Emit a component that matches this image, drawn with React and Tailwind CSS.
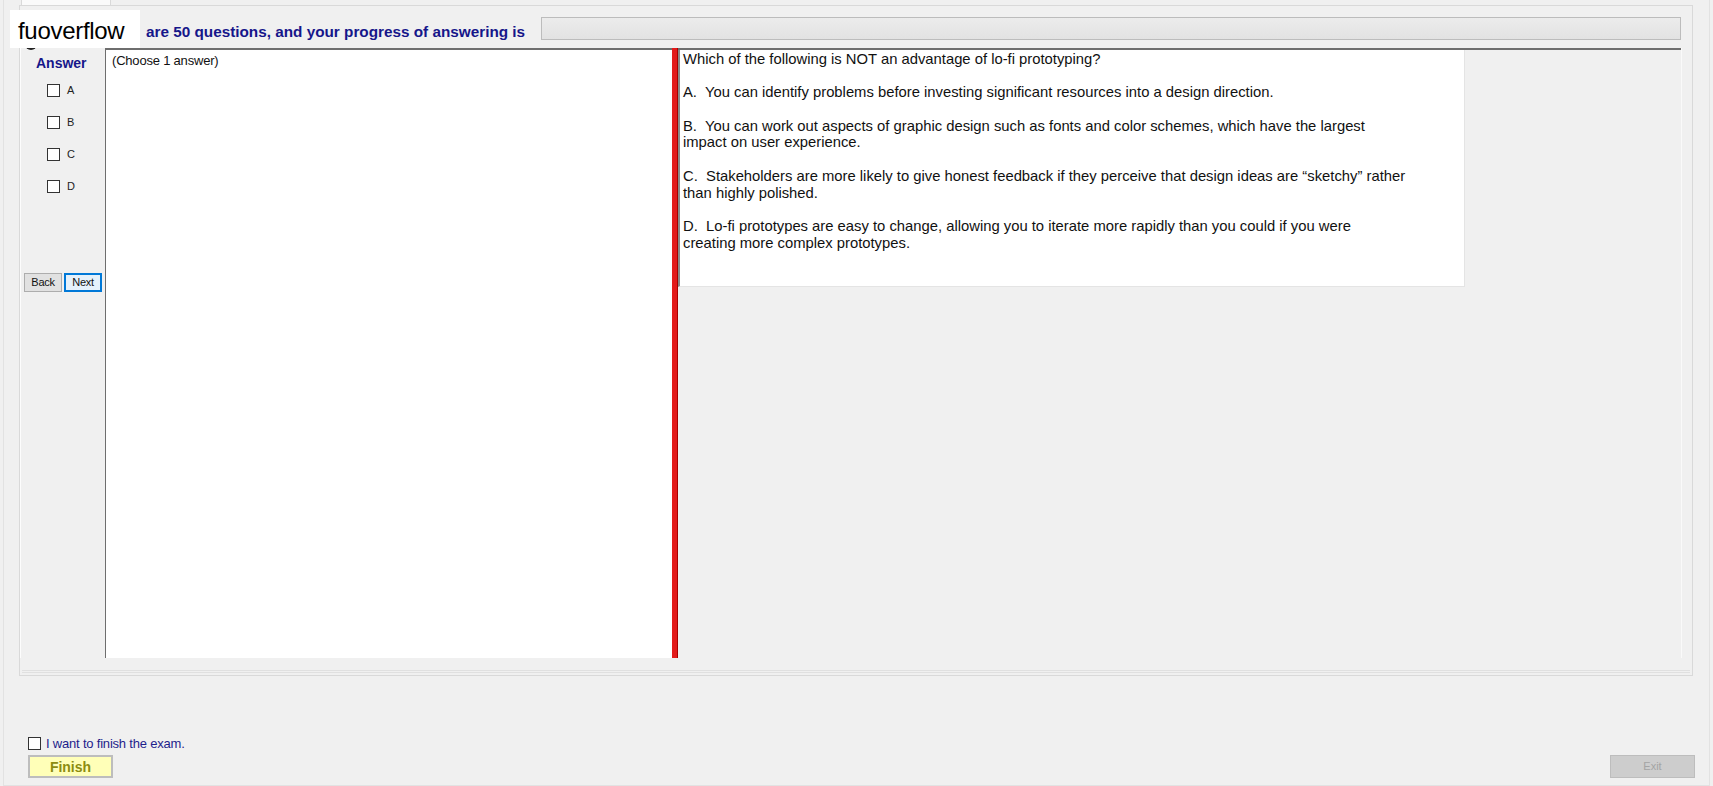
import React from 'react';

const Check = ({ label, className = '' }) => (
    <div className={`flex items-center gap-[7px] ${className}`}>
        <div className="w-[13px] h-[13px] border border-[#333] bg-white"></div>
        <span className="text-[11px] text-[#222] leading-none">{label}</span>
    </div>
);

const App = () => {
    const options = ['A', 'B', 'C', 'D'];

    return (
        <div className="relative w-[1713px] h-[786px] bg-[#f0f0f0] overflow-hidden font-['Liberation_Sans',Arial,sans-serif]">
            {/* watermark */}
            <div className="absolute left-[10px] top-[10px] w-[130px] h-[38px] bg-white z-10 flex items-center pl-[8px]">
                <span className="text-[24px] text-black leading-none tracking-[-0.3px] mt-[3px]">fuoverflow</span>
            </div>

            <div className="h-[786px] border-l border-r border-b border-[#e2e2e2] mx-[3px] pt-0">
                {/* tab header */}
                <div className="pl-[17px] h-[5px]">
                    <div className="w-[90px] h-[5px] bg-[#fafafa] border-l border-r border-[#d9d9d9]"></div>
                </div>

                {/* tab page */}
                <div className="ml-[15px] w-[1674px] h-[671px] border border-[#d9d9d9] bg-[#f0f0f0] flex flex-col">
                    {/* header row */}
                    <div className="h-[42px] flex items-end">
                        <div className="ml-[5px] w-[12px] h-[12px] rounded-full bg-[#222] mb-[-2px]"></div>
                        <div className="ml-[109px] mb-[9px] text-[15.3px] font-bold text-[#16168a] whitespace-nowrap leading-none">
                            are 50 questions, and your progress of answering is
                        </div>
                        <div className="ml-[16px] mb-[8px] w-[1140px] h-[23px] border border-[#bcbcbc] bg-[linear-gradient(#ececec,#e2e2e2)]"></div>
                    </div>

                    {/* content row */}
                    <div className="flex h-[610px]">
                        <div className="w-[85px] pl-[1px] border-l border-[#fdfdfd] flex flex-col">
                            <div className="pl-[14px] pt-[8px] text-[14px] font-bold text-[#16168a] leading-none">Answer</div>
                            <div className="flex flex-col gap-[19px] pl-[25px] pt-[14px]">
                                {options.map((o) => (
                                    <Check key={o} label={o} />
                                ))}
                            </div>
                            <div className="flex gap-[2px] pl-[2px] mt-[80px]">
                                <button className="w-[38px] h-[19px] bg-[#e1e1e1] border border-[#adadad] text-[11px] text-[#111] leading-none tracking-[-0.3px]">Back</button>
                                <button className="w-[38px] h-[19px] bg-[#e5f1fb] border-2 border-[#0078d7] text-[11px] text-[#111] leading-none tracking-[-0.3px]">Next</button>
                            </div>
                        </div>

                        <div className="w-[567px] bg-white border-l border-t-2 border-[#6e6e6e]">
                            <div className="pl-[6px] pt-[1px] text-[13px] text-[#111] tracking-[-0.2px]">(Choose 1 answer)</div>
                        </div>

                        <div className="w-[6px] bg-[#e31b1b] border-r border-[#a80000]"></div>

                        <div className="w-[1003px] border-t-2 border-[#6e6e6e] bg-[#f0f0f0]">
                            <div className="w-[787px] h-[237px] bg-white border-l-2 border-[#8a8a8a] border-r border-b border-r-[#e4e4e4] border-b-[#e4e4e4] pl-[3px] pt-[1px] text-[14.8px] leading-[16.7px] text-[#111] whitespace-nowrap">
                                <p>Which of the following is NOT an advantage of lo-fi prototyping?</p>
                                <p className="mt-[16.7px]">A.&nbsp; You can identify problems before investing significant resources into a design direction.</p>
                                <p className="mt-[16.7px]">B.&nbsp; You can work out aspects of graphic design such as fonts and color schemes, which have the largest<br />impact on user experience.</p>
                                <p className="mt-[16.7px]">C.&nbsp; Stakeholders are more likely to give honest feedback if they perceive that design ideas are “sketchy” rather<br />than highly polished.</p>
                                <p className="mt-[16.7px]">D.&nbsp; Lo-fi prototypes are easy to change, allowing you to iterate more rapidly than you could if you were<br />creating more complex prototypes.</p>
                            </div>
                        </div>

                        <div className="w-[11px] border-l border-[#fafafa]"></div>
                    </div>

                    <div className="mx-[2px] mt-[12px] h-[3px] border-t border-b border-[#e0e0e0]"></div>
                </div>

                {/* bottom area */}
                <div className="flex items-end justify-between pl-[24px] pr-[14px] mt-[61px]">
                    <div className="flex flex-col gap-[5px]">
                        <div className="flex items-center gap-[5px]">
                            <div className="w-[13px] h-[13px] border border-[#333] bg-white"></div>
                            <span className="text-[13px] text-[#1e1e8c] leading-none tracking-[-0.2px]">I want to finish the exam.</span>
                        </div>
                        <button className="w-[85px] h-[23px] bg-[#ffffb8] border-2 border-[#bdbdbd] text-[14px] font-bold text-[#8c8c10] leading-none">Finish</button>
                    </div>
                    <button className="w-[85px] h-[23px] bg-[#cdcdcd] border border-[#bdbdbd] text-[11px] text-[#a4a4a4] leading-none">Exit</button>
                </div>
            </div>
        </div>
    );
};

export default App;
